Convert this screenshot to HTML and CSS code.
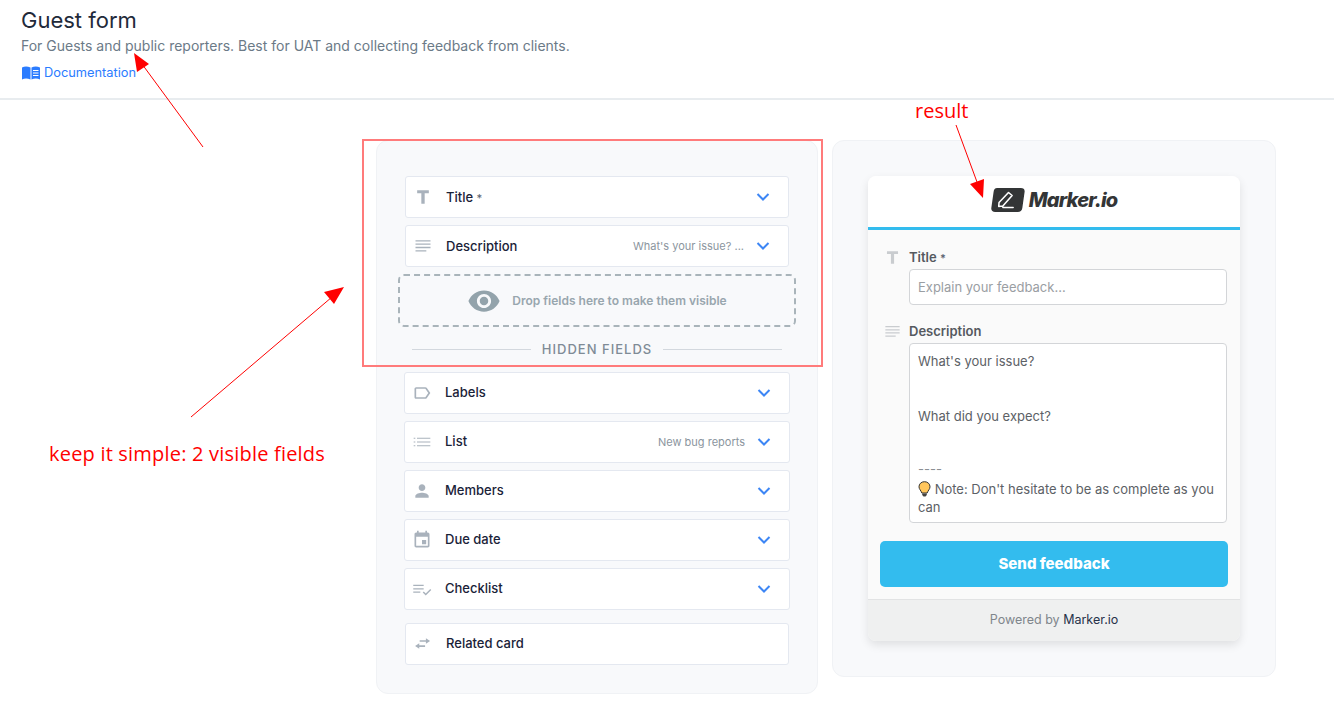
FILE: index.html
```html
<!DOCTYPE html>
<html lang="en">
<head>
  <meta charset="UTF-8" />
  <meta name="viewport" content="width=device-width, initial-scale=1.0" />
  <title>Guest form</title>
  <link rel="stylesheet" href="styles.css">
</head>
<body>
  <svg class="defs" width="0" height="0">
    <symbol id="chevron" viewBox="0 0 14 10">
      <path d="M1.5 2 7 7.5 12.5 2" fill="none" stroke="currentColor" stroke-width="2"/>
    </symbol>
    <symbol id="icon-title" viewBox="0 0 24 24">
      <path d="M5 4v3.500h5V20h4V7.500h5V4z"/>
    </symbol>
    <symbol id="icon-lines" viewBox="0 0 24 24">
      <path d="M3 5h18v1.600H3zM3 9h18v1.600H3zM3 13h18v1.600H3zM3 17h13v1.600H3z"/>
    </symbol>
  </svg>

  <header class="page-head">
    <h1>Guest form</h1>
    <p>For Guests and public reporters. Best for UAT and collecting feedback from clients.</p>
    <a class="doc-link" href="#">
      <svg width="18" height="14" viewBox="0 0 18 14"><path d="M0 1.500C2.500.2 5.500.2 8.500 1.500v12C5.500 12.300 2.500 12.300 0 13.500z" fill="#2b7cff"/><path d="M9.500 1.500C12 .2 15.500.2 18 1.500v12c-2.500-1.200-6-1.200-8.500 0zM11 4v1h5.500V4zm0 2.500v1h5.500v-1zM11 9v1h5.500V9z" fill="#2b7cff" fill-rule="evenodd"/></svg>
      Documentation
    </a>
  </header>

  <main class="content">
    <section class="panel panel-fields">
      <div class="field field-visible">
        <svg class="field-icon"><use href="#icon-title"/></svg>
        <span class="field-name">Title <i class="req">*</i></span>
        <svg class="chevron"><use href="#chevron"/></svg>
      </div>
      <div class="field field-visible">
        <svg class="field-icon"><use href="#icon-lines"/></svg>
        <span class="field-name">Description</span>
        <span class="field-value">What's your issue? ...</span>
        <svg class="chevron"><use href="#chevron"/></svg>
      </div>

      <div class="dropzone">
        <svg width="34" height="34" viewBox="0 0 24 24" fill="#93a3ab"><path d="M12 4.500C7 4.500 2.730 7.610 1 12c1.730 4.390 6 7.500 11 7.500s9.270-3.110 11-7.500c-1.730-4.390-6-7.500-11-7.500zM12 17c-2.760 0-5-2.240-5-5s2.240-5 5-5 5 2.240 5 5-2.240 5-5 5zm0-8c-1.660 0-3 1.340-3 3s1.340 3 3 3 3-1.340 3-3-1.340-3-3-3z"/></svg>
        <span>Drop fields here to make them visible</span>
      </div>

      <div class="divider"><span>HIDDEN FIELDS</span></div>

      <div class="hidden-list">
        <div class="field">
          <svg class="field-icon" viewBox="0 0 24 24"><path d="M17.630 5.840C17.270 5.330 16.670 5 16 5L5 5.010C3.900 5.010 3 5.900 3 7v10c0 1.100.9 1.990 2 1.990L16 19c.67 0 1.270-.33 1.630-.84L22 12l-4.370-6.160zM16 17H5V7h11l3.550 5L16 17z"/></svg>
          <span class="field-name">Labels</span>
          <svg class="chevron"><use href="#chevron"/></svg>
        </div>
        <div class="field">
          <svg class="field-icon" viewBox="0 0 24 24"><path d="M2 7h2v1H2zM6 7h16v1H6zM2 11.500h2v1H2zM6 11.500h16v1H6zM2 16h2v1H2zM6 16h16v1H6z"/></svg>
          <span class="field-name">List</span>
          <span class="field-value">New bug reports</span>
          <svg class="chevron"><use href="#chevron"/></svg>
        </div>
        <div class="field">
          <svg class="field-icon" viewBox="0 0 24 24"><path d="M12 12c2.210 0 4-1.790 4-4s-1.790-4-4-4-4 1.790-4 4 1.790 4 4 4zm0 2c-2.670 0-8 1.340-8 4v2h16v-2c0-2.660-5.330-4-8-4z"/></svg>
          <span class="field-name">Members</span>
          <svg class="chevron"><use href="#chevron"/></svg>
        </div>
        <div class="field">
          <svg class="field-icon" viewBox="0 0 24 24"><path d="M17 12h-5v5h5v-5zM16 1v2H8V1H6v2H5c-1.110 0-1.990.9-1.990 2L3 19c0 1.100.89 2 2 2h14c1.100 0 2-.9 2-2V5c0-1.100-.9-2-2-2h-1V1h-2zm3 18H5V8h14v11z"/></svg>
          <span class="field-name">Due date</span>
          <svg class="chevron"><use href="#chevron"/></svg>
        </div>
        <div class="field">
          <svg class="field-icon" viewBox="0 0 24 24"><path d="M1.500 7H14v1.500H1.500zM1.500 11H14v1.500H1.500zM1.500 15H10v1.500H1.500z"/><path d="m13.500 15.500 3 3 6-6" fill="none" stroke="currentColor" stroke-width="1.800"/></svg>
          <span class="field-name">Checklist</span>
          <svg class="chevron"><use href="#chevron"/></svg>
        </div>
      </div>

      <div class="field field-related">
        <svg class="field-icon" viewBox="0 0 24 24"><path d="M8 7.400h7.500V5l5 3.400-5 3.400V9.400H8zM14.500 13.500h-7V11l-5 3.400 5 3.400v-2.300h7z"/></svg>
        <span class="field-name">Related card</span>
      </div>
    </section>

    <section class="panel panel-result">
      <div class="widget">
        <div class="widget-head">
          <svg width="34" height="24" viewBox="0 0 33 24" preserveAspectRatio="none"><path d="M6 0h23c2.500 0 4 1.500 3.600 4l-2.200 16c-.3 2.500-2 4-4.400 4H4c-2.500 0-4-1.500-3.700-4L2.500 4C2.800 1.500 3.800 0 6 0z" fill="#333536"/><path d="M7.500 18.500l.3-4L17 4.500l3.500 3L11.500 18zM11.500 19.500h10" fill="none" stroke="#fff" stroke-width="1.500" stroke-linecap="round" stroke-linejoin="round"/></svg>
          <span class="logo-text">Marker.io</span>
        </div>
        <div class="widget-body">
          <div class="form-row form-row-title">
            <svg class="form-icon"><use href="#icon-title"/></svg>
            <div class="form-col">
              <label>Title <i class="req">*</i></label>
              <div class="input placeholder">Explain your feedback...</div>
            </div>
          </div>
          <div class="form-row">
            <svg class="form-icon"><use href="#icon-lines"/></svg>
            <div class="form-col">
              <label>Description</label>
              <div class="input textarea">
                <div class="line">What's your issue?</div>
                <div class="line line-gap">What did you expect?</div>
                <div class="line line-rule">----</div>
                <div class="line line-note"><svg class="bulb" width="13" height="16" viewBox="0 0 13 16"><path d="M6.500.7C3.200.7 1 3 1 5.800c0 2.400 2 3.600 2.800 6.200h5.400C10 9.400 12 8.200 12 5.800 12 3 9.800.7 6.500.7z" fill="#ffc65c" stroke="#333" stroke-width="1"/><path d="M4.200 12.500h4.600v1.500l-1.300 1.400h-2L4.200 14z" fill="#444"/></svg> Note: Don't hesitate to be as complete as you can</div>
              </div>
            </div>
          </div>
          <button class="send-btn">Send feedback</button>
        </div>
        <div class="widget-foot">Powered by <span>Marker.io</span></div>
      </div>
    </section>
  </main>

  <!-- annotations drawn over the screenshot -->
  <div class="note-box"></div>
  <span class="note note-result">result</span>
  <span class="note note-simple">keep it simple: 2 visible fields</span>
  <svg class="note-arrows" width="1334" height="704" viewBox="0 0 1334 704">
    <path d="M203 147 142 64M191 417 332 297M956 125 977 182" stroke="#f00" stroke-width="1" fill="none"/>
    <path d="M134 53 149 64 137 72zM344 287 334 304 324 292zM983 198 970 184 984 179z" fill="#f00"/>
  </svg>
</body>
</html>
```

FILE: styles.css
```css
* {
  box-sizing: border-box;
}
body {
  font-family: Inter, "Liberation Sans", sans-serif;
  margin: 0;
  padding: 0;
  background: #fff;
  color: #1a2238;
  height: 704px;
  overflow: hidden;
  position: relative;
}
.defs {
  position: absolute;
}
.page-head {
  height: 100px;
  padding: 7px 21px 0;
  border-bottom: 2px solid #e8ecef;
}
.page-head h1 {
  margin: 0;
  font-size: 22px;
  line-height: 26px;
  font-weight: 400;
  color: #1f2a3a;
}
.page-head p {
  margin: 4px 0 0;
  font-size: 14px;
  line-height: 18px;
  color: #6b7a87;
}
.doc-link {
  display: flex;
  align-items: center;
  gap: 4px;
  margin: 9px 0 0 1px;
  font-size: 12.800px;
  line-height: 18px;
  color: #2b7cff;
  text-decoration: none;
}
.content {
  display: flex;
  align-items: flex-start;
  gap: 14px;
  padding: 40px 0 0 376px;
}
.panel {
  background: #f8f9fb;
  border: 1px solid #f0f2f5;
  border-radius: 12px;
}
.panel-fields {
  width: 442px;
  height: 554px;
  padding: 35px 28px 0;
}
.panel-result {
  width: 444px;
  height: 537px;
  padding: 35px 35px 0;
}
.field {
  display: flex;
  align-items: center;
  height: 42px;
  padding: 0 18px 0 7px;
  background: #fff;
  border: 1px solid #e4e8f0;
  border-radius: 3px;
  font-size: 13px;
}
.field-visible {
  margin-bottom: 7px;
}
.field-icon {
  width: 20px;
  height: 20px;
  fill: #a9b2bc;
  color: #a9b2bc;
  flex: none;
  margin-right: 13px;
}
.field-name {
  font-weight: 500;
  flex: 1;
}
.hidden-list .field-name,
.field-related .field-name {
  margin-top: -2px;
}
.field-value {
  font-size: 11px;
  color: #8b959e;
  margin-right: 12px;
}
.req {
  font-style: normal;
  font-size: 11px;
  line-height: 1;
  color: #5d6672;
}
.chevron {
  width: 14px;
  height: 10px;
  color: #3d86f5;
  flex: none;
}
.dropzone {
  display: flex;
  align-items: center;
  justify-content: center;
  gap: 11px;
  height: 53px;
  margin: 0 -7px;
  border: 2px dashed #a9b4ba;
  border-radius: 6px;
  font-size: 12px;
  font-weight: 600;
  color: #98a6ae;
}
.divider {
  display: flex;
  align-items: center;
  gap: 11px;
  height: 44px;
  margin-bottom: 1px;
  padding: 0 7px;
  font-size: 13px;
  font-weight: 500;
  letter-spacing: 1px;
  color: #7f8b96;
}
.divider::before,
.divider::after {
  content: "";
  flex: 1;
  height: 1px;
  background: #d3d8de;
}
.hidden-list {
  display: flex;
  flex-direction: column;
  gap: 7px;
  margin: 0 -1px 13px;
}
.widget {
  width: 372px;
  height: 465px;
  display: flex;
  flex-direction: column;
  background: #fafafa;
  border-radius: 8px;
  box-shadow: 0 4px 10px rgba(0, 0, 0, 0.1);
  overflow: hidden;
}
.widget-head {
  flex: none;
  display: flex;
  align-items: center;
  justify-content: center;
  gap: 4px;
  height: 54px;
  padding-bottom: 4px;
  background: #fff;
  border-bottom: 3px solid #33bcee;
}
.logo-text {
  font-size: 20px;
  font-weight: 800;
  font-style: italic;
  letter-spacing: -0.800px;
  color: #333536;
}
.widget-body {
  flex: 1;
  padding: 19px 12px 0;
}
.form-row {
  display: flex;
  padding-left: 3px;
}
.form-row-title {
  margin-bottom: 18px;
}
.form-icon {
  width: 19px;
  height: 19px;
  margin: -1px 7px 0 0;
  fill: #c9cccf;
  flex: none;
}
.form-col {
  width: 318px;
}
.form-col label {
  display: block;
  margin-bottom: 3px;
  font-size: 13px;
  line-height: 17px;
  font-weight: 600;
  color: #55595f;
}
.input {
  background: #fff;
  border: 1px solid #d3d5d8;
  border-radius: 4px;
  padding: 0 8px;
  font-size: 13px;
  color: #5c6166;
}
.placeholder {
  height: 36px;
  line-height: 34px;
  color: #9a9ea3;
}
.textarea {
  height: 180px;
  padding-top: 8px;
  line-height: 18px;
}
.line-gap {
  margin-top: 37px;
}
.line-rule {
  margin-top: 35px;
  color: #8b8f94;
}
.line-note {
  margin-top: 2px;
}
.bulb {
  vertical-align: -3px;
}
.send-btn {
  display: block;
  width: 348px;
  height: 46px;
  margin-top: 18px;
  padding-bottom: 2px;
  border: none;
  border-radius: 5px;
  background: #33bcee;
  color: #fff;
  font-family: inherit;
  font-size: 15px;
  font-weight: 800;
  cursor: pointer;
}
.widget-foot {
  flex: none;
  height: 42px;
  line-height: 40px;
  text-align: center;
  font-size: 12.500px;
  color: #7f868c;
  background: #eff0f0;
  border-top: 1px solid #e2e3e4;
}
.widget-foot span {
  color: #27324a;
}
.note-box {
  position: absolute;
  left: 362px;
  top: 139px;
  width: 461px;
  height: 228px;
  border: 2px solid #ff7b7b;
}
.note {
  position: absolute;
  font-family: "Open Sans", sans-serif;
  font-size: 20px;
  line-height: 26px;
  color: #f00;
}
.note-result {
  left: 915px;
  top: 98px;
}
.note-simple {
  left: 49px;
  top: 441px;
  letter-spacing: 0.200px;
}
.note-arrows {
  position: absolute;
  left: 0;
  top: 0;
  pointer-events: none;
}
```
